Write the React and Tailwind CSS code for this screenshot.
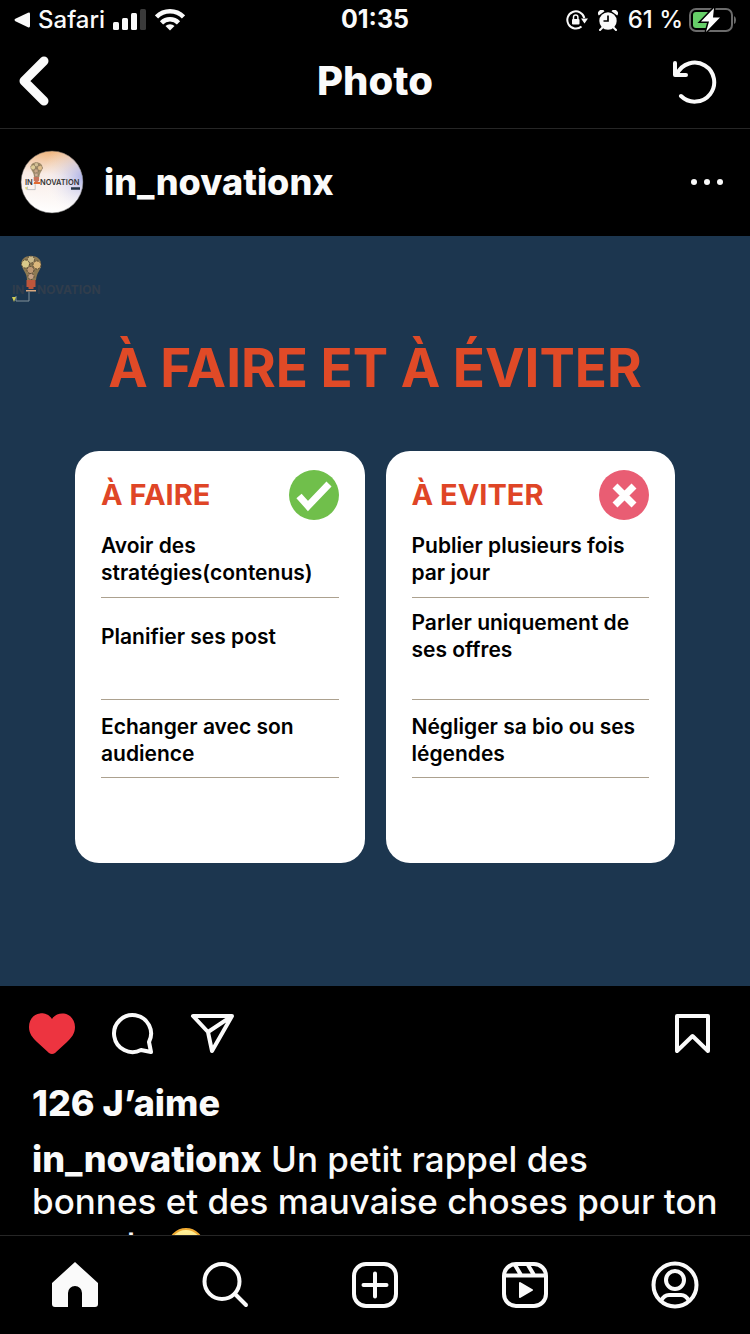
const columns = [
  {
    title: 'À FAIRE',
    good: true,
    items: ['Avoir des stratégies(contenus)', 'Planifier ses post', 'Echanger avec son audience'],
  },
  {
    title: 'À EVITER',
    good: false,
    items: ['Publier plusieurs fois par jour', 'Parler uniquement de ses offres', 'Négliger sa bio ou ses légendes'],
  },
];

const rowSpacing = ['pb-[11px]', 'pt-[11px] pb-9', 'pt-[13px] pb-2.5'];

function StatusBar() {
  return (
    <div className="grid h-10 shrink-0 grid-cols-3 items-center px-3.5 text-[24px] font-medium">
      <div className="flex items-center gap-2">
        <svg width="16" height="16" viewBox="0 0 16 16" fill="currentColor">
          <path d="M1.4 6.800 14 .8Q16 0 16 2v12q0 2-2 1.200L1.400 9.200Q-.4 8 1.400 6.800Z" />
        </svg>
        <span>Safari</span>
        <svg width="34" height="22" viewBox="0 0 34 22" fill="currentColor">
          <rect x="0" y="13" width="6" height="8" rx="1.500" />
          <rect x="9" y="9" width="6" height="12" rx="1.500" />
          <rect x="18" y="4" width="6" height="17" rx="1.500" />
          <rect x="27" y="0" width="6" height="21" rx="1.500" fill="#3a3a3a" />
        </svg>
        <svg width="30" height="22" viewBox="0 0 30 22" fill="none" stroke="currentColor" strokeWidth="4.500">
          <path d="M1.500 8a19 19 0 0 1 27 0" />
          <path d="M6.500 13.800a12 12 0 0 1 17 0" />
          <path d="M15 21.500l-4.500-4.400a6.500 6.500 0 0 1 9 0Z" fill="currentColor" stroke="none" />
        </svg>
      </div>
      <div className="text-center text-[25px] font-bold">01:35</div>
      <div className="flex items-center justify-end gap-1.5">
        <svg width="22" height="20" viewBox="0 0 22 20" fill="none" stroke="currentColor" strokeWidth="2">
          <path d="M18.300 8A8.600 8.600 0 1 0 15.500 16.500" />
          <path d="M15 8.500h7l-3.500 5Z" fill="currentColor" stroke="none" />
          <rect x="6" y="9" width="7.500" height="5.500" rx="1" fill="currentColor" stroke="none" />
          <path d="M7.500 9.500V7.300a2.200 2.200 0 0 1 4.400 0v2.200" strokeWidth="1.500" />
        </svg>
        <svg width="20" height="21" viewBox="0 0 20 21" className="mx-1">
          <g fill="currentColor">
            <circle cx="10" cy="11" r="8.700" />
            <path d="M.8 5.500A3.500 3.500 0 0 1 6.500 1.200ZM19.200 5.500a3.500 3.500 0 0 0-5.700-4.300Z" />
          </g>
          <path d="m4.500 17.500-2.500 2.500M15.500 17.500l2.500 2.500" stroke="currentColor" strokeWidth="2" strokeLinecap="round" />
          <path d="M10 5.500V11H5.500" stroke="#000" strokeWidth="1.700" fill="none" />
        </svg>
        <span className="whitespace-nowrap">61 %</span>
        <svg width="47" height="24" viewBox="0 0 47 24">
          <rect x="1" y="1" width="42" height="22" rx="6" fill="none" stroke="#6b6b6b" strokeWidth="2" />
          <path d="M45 8v8q2-1 2-4t-2-4Z" fill="#6b6b6b" />
          <rect x="4" y="4" width="17" height="16" rx="3" fill="#66ce68" />
          <path d="M25 0 12 13.500h8L17 24l14-14.500h-7Z" fill="#fff" stroke="#000" strokeWidth="3" paintOrder="stroke" />
        </svg>
      </div>
    </div>
  );
}

function TopBar() {
  return (
    <header className="grid h-[89px] shrink-0 grid-cols-3 items-center border-b border-[#262626] px-[18px] pb-1.5">
      <button type="button" aria-label="Retour" className="justify-self-start">
        <svg width="32" height="50" viewBox="0 0 32 50" fill="none" stroke="currentColor" strokeWidth="9" strokeLinecap="round" strokeLinejoin="round">
          <path d="M26 5 6 25l20 20" />
        </svg>
      </button>
      <h1 className="text-center text-[40px] leading-none font-extrabold">Photo</h1>
      <button type="button" aria-label="Actualiser" className="justify-self-end pr-3.5">
        <svg width="46" height="46" viewBox="0 0 46 46" fill="none" stroke="currentColor" strokeWidth="4" strokeLinecap="round" strokeLinejoin="round">
          <path d="M9 38A19.500 19.500 0 1 0 5 16" />
          <path d="M3 5v12h11" />
        </svg>
      </button>
    </header>
  );
}

function Bulb() {
  return (
    <g>
      <path d="M10 11C8 4 13 1 19 1s11 3 10 10c-1 5-4 6-5 14H15c0-7-4-9-5-14Z" fill="#8c7952" />
      <g strokeWidth="1" stroke="#554733" strokeDasharray="2 1">
        <circle cx="19" cy="4.500" r="3.500" fill="#c9b889" />
        <circle cx="13.500" cy="9" r="4" fill="#d9c98a" />
        <circle cx="25" cy="10" r="4" fill="#dcb87c" />
        <circle cx="18.500" cy="15" r="3.500" fill="#bd9873" />
        <circle cx="19" cy="21.500" r="3" fill="#c4a083" />
      </g>
      <path d="M14.500 25h9v7h-2v2h-5v-2h-2Z" fill="#bd563b" />
      <path d="M14 35h10v1.500H14Z" fill="#dba97f" />
      <path d="M17 37v9H4v-5" fill="none" stroke="#82919a" />
      <path d="M0 42h4l-2 5Z" fill="#d2cd55" />
    </g>
  );
}

function Avatar() {
  return (
    <svg width="64" height="64" viewBox="0 0 64 64">
      <defs>
        <linearGradient id="avatarBase" x1="0.500" y1="0" x2="0.400" y2="1">
          <stop offset="0" stopColor="#efb47c" />
          <stop offset="0.380" stopColor="#f8ebe5" />
          <stop offset="1" stopColor="#fff" />
        </linearGradient>
        <radialGradient id="avatarBlue" cx="1" cy="0.420" r="0.650">
          <stop offset="0" stopColor="#adb2e8" />
          <stop offset="1" stopColor="#fff" stopOpacity="0" />
        </radialGradient>
      </defs>
      <circle cx="32" cy="32" r="31" fill="url(#avatarBase)" />
      <circle cx="32" cy="32" r="31" fill="url(#avatarBlue)" stroke="#555" strokeWidth="0.500" />
      <g transform="translate(5 12) scale(.6)" opacity=".8">
        <Bulb />
      </g>
      <g fill="#333" fontFamily="Inter, sans-serif" fontWeight="600" fontSize="7.500">
        <text x="5" y="35">IN</text>
        <text x="20" y="35">NOVATION</text>
      </g>
      <path d="M14 33h6" stroke="#e36b32" strokeWidth="2" />
      <path d="M51 38.500h9" stroke="#243447" strokeWidth="2.500" />
    </svg>
  );
}

function PostHeader() {
  return (
    <div className="flex h-[107px] shrink-0 items-center gap-5 px-5 pb-0.5">
      <Avatar />
      <a href="#profil" className="flex-1 text-[36px] leading-none font-extrabold">in_novationx</a>
      <button type="button" aria-label="Plus d’options" className="pr-1.5">
        <svg width="34" height="8" viewBox="0 0 34 8" fill="currentColor">
          <circle cx="4" cy="4" r="3" />
          <circle cx="17" cy="4" r="3" />
          <circle cx="30" cy="4" r="3" />
        </svg>
      </button>
    </div>
  );
}

function Badge({ good }) {
  return (
    <svg width="50" height="50" viewBox="0 0 50 50" fill="none" stroke="#fff">
      <circle cx="25" cy="25" r="25" fill={good ? '#70bf4b' : '#e95d73'} stroke="none" />
      {good ? (
        <path d="m10 26 9 10 21-22" strokeWidth="7" />
      ) : (
        <path d="m16 16 19 19M35 16 16 35" strokeWidth="7" />
      )}
    </svg>
  );
}

function Card({ title, good, items }) {
  return (
    <div className="flex-1 rounded-3xl bg-white px-[26px] pt-[19px] pb-[85px] text-black">
      <div className="mb-3 flex items-center justify-between">
        <h3 className="text-[29px] font-bold text-[#df4526]">{title}</h3>
        <Badge good={good} />
      </div>
      <ul>
        {items.map((item, i) => (
          <li key={item} className={`border-b border-[#aca18f] ${rowSpacing[i]}`}>
            <p className="flex min-h-[54px] items-center text-[21px] leading-[27px] font-semibold">{item}</p>
          </li>
        ))}
      </ul>
    </div>
  );
}

function PostImage() {
  return (
    <section className="aspect-square w-full shrink-0 bg-[#1c364f]">
      <div className="pt-[19px] pl-3">
        <svg width="96" height="49" viewBox="0 0 96 49">
          <g fill="#303d4c" fontFamily="Inter, sans-serif" fontWeight="700" fontSize="12">
            <text x="0" y="39">IN</text>
            <text x="25" y="39">NOVATION</text>
          </g>
          <Bulb />
        </svg>
      </div>
      <h2 className="mt-8 text-center text-[53px] leading-[64px] font-bold whitespace-nowrap text-[#e04a27]">À FAIRE ET À ÉVITER</h2>
      <div className="mt-[51px] flex gap-[21px] px-[10%]">
        {columns.map((column) => (
          <Card key={column.title} {...column} />
        ))}
      </div>
    </section>
  );
}

function Actions() {
  return (
    <div className="flex h-24 shrink-0 items-center px-7">
      <button type="button" aria-label="Je n’aime plus">
        <svg width="48" height="42" viewBox="0 0 48 42" fill="#ed3440">
          <path d="M24 6C20 0 14 0 12 .5 5 1.500 1 7 1 14c0 7 4 11 8 15l12 11q3 2 6 0l12-11c4-4 8-8 8-15C47 7 42 1 36 .5 32 0 27 1 24 6Z" />
        </svg>
      </button>
      <button type="button" aria-label="Commenter" className="ml-9">
        <svg width="42" height="42" viewBox="0 0 42 42" fill="none" stroke="currentColor" strokeWidth="4" strokeLinejoin="round">
          <path d="M37 29A18.500 18.500 0 1 0 29 37l10 2Z" />
        </svg>
      </button>
      <button type="button" aria-label="Partager" className="ml-9">
        <svg width="46" height="42" viewBox="0 0 46 42" fill="none" stroke="currentColor" strokeWidth="4" strokeLinejoin="round">
          <path d="M3 3h39L22 38l-4-19ZM18 19 42 3" />
        </svg>
      </button>
      <button type="button" aria-label="Enregistrer" className="mr-2.5 ml-auto">
        <svg width="38" height="42" viewBox="0 0 38 42" fill="none" stroke="currentColor" strokeWidth="4" strokeLinejoin="round">
          <path d="M3 3h31v35L18.500 23 3 38Z" />
        </svg>
      </button>
    </div>
  );
}

function Caption() {
  return (
    <div className="pr-7 pl-8">
      <p className="text-[36px] leading-[42px] font-extrabold">126 J’aime</p>
      <p className="mt-3.5 text-[35px] leading-[42px] font-medium">
        <a href="#profil" className="text-[36px] font-extrabold">in_novationx</a> Un petit rappel des
        <br />
        bonnes et des mauvaise choses pour ton compte{' '}
        <svg width="36" height="36" viewBox="0 0 36 36" className="inline-block align-text-bottom" role="img" aria-label="visage souriant">
          <defs>
            <linearGradient id="face" x1="0" y1="0" x2="0" y2="1">
              <stop offset="0" stopColor="#fff4a0" />
              <stop offset="1" stopColor="#f7b92f" />
            </linearGradient>
          </defs>
          <circle cx="18" cy="18" r="17" fill="url(#face)" stroke="#f0aa32" strokeWidth="2" />
          <path d="M7 12q3-3 6 0M23 12q3-3 6 0M9 21q9 12 18 0" fill="none" stroke="#7b5018" strokeWidth="2" />
        </svg>
      </p>
    </div>
  );
}

const tabs = [
  {
    label: 'Accueil',
    icon: <path d="M24 1 1 22v21q0 3 3 3h13V32a7 7 0 0 1 14 0v14h13q3 0 3-3V22Z" fill="currentColor" stroke="none" />,
  },
  {
    label: 'Rechercher',
    icon: (
      <>
        <circle cx="21" cy="20.500" r="17.500" />
        <path d="m34 33 11 11" />
      </>
    ),
  },
  {
    label: 'Créer',
    icon: (
      <>
        <rect x="3" y="3" width="42" height="42" rx="12" />
        <path d="M24 12.500v23M12.500 24h23" />
      </>
    ),
  },
  {
    label: 'Reels',
    icon: (
      <>
        <rect x="3" y="3" width="42" height="42" rx="12" />
        <path d="M4 14.500h40M14 4l6 10M27 4l6 10" />
        <path d="m19 22 12 7-12 7Z" fill="currentColor" strokeWidth="2" />
      </>
    ),
  },
  {
    label: 'Profil',
    icon: (
      <>
        <circle cx="24" cy="24" r="21.500" />
        <circle cx="24" cy="19" r="9" />
        <path d="M10 40q3-6 8-6h12q5 0 8 6" />
      </>
    ),
  },
];

function TabBar() {
  return (
    <nav className="grid h-[99px] shrink-0 grid-cols-5 border-t border-[#262626]">
      {tabs.map(({ label, icon }) => (
        <button key={label} type="button" aria-label={label} className="flex items-center justify-center">
          <svg width="48" height="48" viewBox="0 0 48 48" fill="none" stroke="currentColor" strokeWidth="4" strokeLinecap="round" strokeLinejoin="round">
            {icon}
          </svg>
        </button>
      ))}
    </nav>
  );
}

export default function App() {
  return (
    <div className="flex h-screen flex-col bg-black font-['Inter',sans-serif] text-[#fafafa]">
      <StatusBar />
      <TopBar />
      <main className="flex min-h-0 flex-1 flex-col overflow-hidden">
        <PostHeader />
        <PostImage />
        <Actions />
        <Caption />
      </main>
      <TabBar />
    </div>
  );
}
